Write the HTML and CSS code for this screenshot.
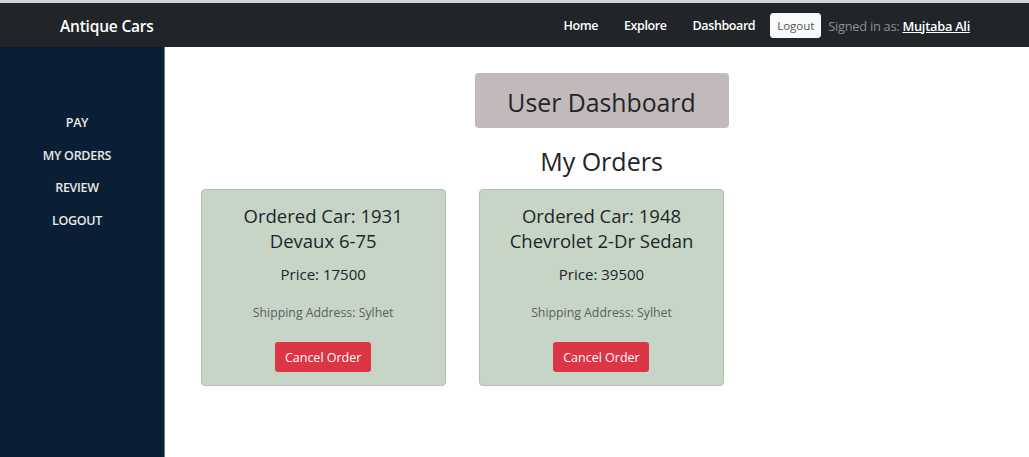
FILE: index.html
```html
<!DOCTYPE html>
<html>
<head>
<meta charset="utf-8">
<link rel="stylesheet" href="styles.css">
</head>
<body>
<div class="topline"></div>
<nav class="navbar">
  <a class="brand" href="#">Antique Cars</a>
  <div class="nav-right">
    <a class="nav-link" href="#">Home</a>
    <a class="nav-link" href="#">Explore</a>
    <a class="nav-link" href="#">Dashboard</a>
    <button class="btn-logout">Logout</button>
    <span class="signed">Signed in as: <a href="#" class="user">Mujtaba Ali</a></span>
  </div>
</nav>
<div class="layout">
  <aside class="sidebar">
    <a href="#">PAY</a>
    <a href="#">MY ORDERS</a>
    <a href="#">REVIEW</a>
    <a href="#">LOGOUT</a>
  </aside>
  <main class="main">
    <div class="head-wrap"><h1 class="dash-title">User Dashboard</h1></div>
    <h2 class="orders-title">My Orders</h2>
    <div class="row">
      <div class="col">
        <div class="card">
          <h3 class="card-title">Ordered Car: 1931 Devaux 6-75</h3>
          <p class="price">Price: 17500</p>
          <p class="ship">Shipping Address: Sylhet</p>
          <button class="btn-cancel">Cancel Order</button>
        </div>
      </div>
      <div class="col">
        <div class="card">
          <h3 class="card-title">Ordered Car: 1948 Chevrolet 2-Dr Sedan</h3>
          <p class="price">Price: 39500</p>
          <p class="ship">Shipping Address: Sylhet</p>
          <button class="btn-cancel">Cancel Order</button>
        </div>
      </div>
      <div class="col"></div>
    </div>
  </main>
</div>
</body>
</html>
```
FILE: styles.css
```css
* { box-sizing: border-box; }
html, body { margin: 0; padding: 0; height: 100%; }
body {
  font-family: "Open Sans", "Noto Sans", "Liberation Sans", sans-serif;
  background: #fff;
  color: #212529;
  overflow: hidden;
}
a { text-decoration: none; color: inherit; }
.topline { height: 3px; background: #d4d4d4; }
.navbar {
  height: 44px;
  background: #212529;
  display: flex;
  align-items: center;
  justify-content: space-between;
  padding: 1px 59px 0 60px;
}
.brand { color: #fff; font-size: 15.5px; font-weight: 600; letter-spacing: -0.2px; }
.nav-right { display: flex; align-items: center; }
.nav-link { color: #fff; font-size: 12.5px; font-weight: 600; margin-left: 26px; letter-spacing: -0.4px; }
.nav-link:first-child { margin-left: 0; }
.btn-logout {
  margin-left: 15px;
  background: #f8f9fa;
  border: 1px solid #f8f9fa;
  border-radius: 3px;
  font-family: inherit;
  font-size: 11.5px;
  color: #555;
  height: 25px;
  width: 51px;
  padding: 0;
}
.signed { color: #8c8f93; font-size: 12.8px; margin-left: 7px; letter-spacing: -0.25px; }
.user { color: #fff; text-decoration: underline; font-weight: 600; }
.layout { display: flex; height: calc(100% - 47px); }
.sidebar {
  width: 165px;
  flex-shrink: 0;
  background: #0a1f35;
  border-right: 1px solid #6e7680;
  display: flex;
  flex-direction: column;
  align-items: center;
  padding: 67px 10px 0 0;
  gap: 14px;
}
.sidebar a { color: #e8e8e8; font-size: 12.5px; font-weight: 600; line-height: 18.5px; letter-spacing: -0.3px; }
.main { flex: 1; padding: 26px 10px 0 19px; }
.head-wrap { display: flex; justify-content: center; }
.dash-title {
  margin: 0;
  background: #c1b9ba;
  border-radius: 4px;
  width: 254px;
  height: 55px;
  display: flex;
  align-items: center;
  justify-content: center;
  font-size: 24.8px;
  font-weight: 400;
  color: #212529;
  padding-top: 3px;
}
.orders-title { margin: 16px 0 0; text-align: center; font-size: 25px; font-weight: 400; line-height: 34px; color: #212529; }
.row { display: grid; grid-template-columns: repeat(3, 1fr); margin-top: 11px; }
.col { display: flex; justify-content: center; }
.card {
  width: 245px;
  height: 197px;
  background: #c6d5c6;
  border: 1px solid #b3bfb3;
  border-radius: 4px;
  text-align: center;
  padding: 13px 16px 0;
}
.card-title { margin: 0; font-size: 18.5px; font-weight: 400; line-height: 25px; color: #212529; }
.price { margin: 11px 0 0; font-size: 15px; line-height: 20px; }
.ship { margin: 20px 0 0; font-size: 12.3px; color: #5a5f63; line-height: 18px; }
.btn-cancel {
  margin-top: 20px;
  background: #dc3545;
  color: #fff;
  border: none;
  border-radius: 3px;
  font-family: inherit;
  font-size: 12.5px;
  width: 96px;
  height: 30px;
  padding: 0;
}
```
